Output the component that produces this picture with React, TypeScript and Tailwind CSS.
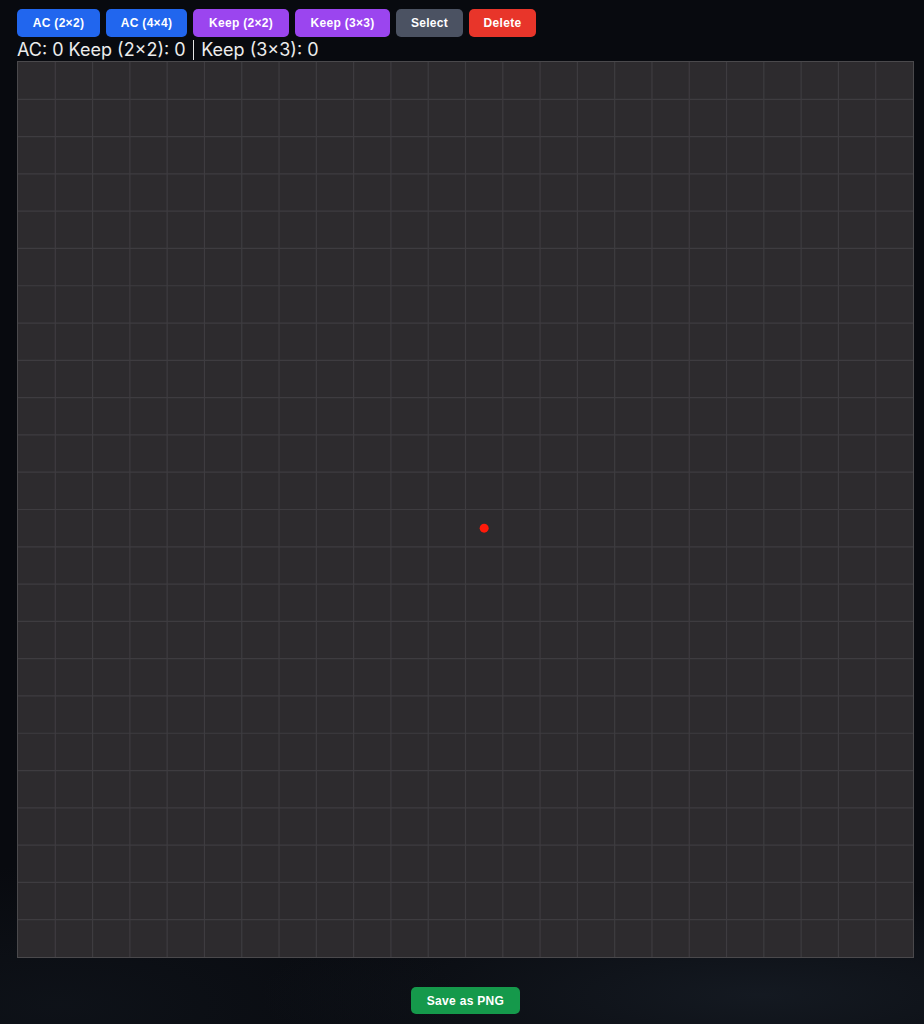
import React from "react";

const CELLS = 24;
const SIZE = 895;

function Grid() {
  const step = SIZE / CELLS;
  const lines: React.ReactElement[] = [];
  for (let i = 1; i < CELLS; i++) {
    const p = i * step;
    lines.push(<line key={`v${i}`} x1={p} y1={0} x2={p} y2={SIZE} stroke="#3e3c40" strokeWidth={1.2} />);
    lines.push(<line key={`h${i}`} x1={0} y1={p} x2={SIZE} y2={p} stroke="#3e3c40" strokeWidth={1.2} />);
  }
  return (
    <svg width={SIZE} height={SIZE} viewBox={`0 0 ${SIZE} ${SIZE}`} className="block">
      <rect x={0} y={0} width={SIZE} height={SIZE} fill="#2d2b2e" />
      {lines}
      <circle cx={12 * step + step / 2} cy={12 * step + step / 2} r={4.5} fill="#ff1a0a" />
    </svg>
  );
}

export default function App() {
  const btn =
    "h-7 px-3.5 rounded-[5px] text-white text-[12px] font-bold tracking-wide leading-none flex items-center justify-center";
  return (
    <div
      className="min-h-[1024px] w-full text-white"
      style={{
        fontFamily: "'Liberation Sans', Arial, sans-serif",
        background:
          "radial-gradient(ellipse 500px 110px at 760px 995px, rgba(38,48,60,0.4), transparent), radial-gradient(ellipse 400px 140px at 60px 1005px, rgba(28,36,46,0.3), transparent), #080a0f",
      }}
    >
      <div className="pl-[17px] pt-[9px] flex flex-col items-start w-[914px]">
        <div className="flex gap-[6px]">
          <button className={`${btn} bg-[#2166ee] w-[83px]`}>AC (2×2)</button>
          <button className={`${btn} bg-[#2166ee] w-[81px]`}>AC (4×4)</button>
          <button className={`${btn} bg-[#9b45ef] w-[96px]`}>Keep (2×2)</button>
          <button className={`${btn} bg-[#9b45ef] w-[95px]`}>Keep (3×3)</button>
          <button className={`${btn} bg-[#4b5262] w-[67px]`}>Select</button>
          <button className={`${btn} bg-[#e8352a] w-[67px]`}>Delete</button>
        </div>
        <div
          className="h-[24px] pt-[2px] flex items-center text-[18px] leading-none text-[#ececec]"
          style={{ fontFamily: "Inter, 'Noto Sans', sans-serif" }}
        >
          <span>AC: 0 Keep (2×2): 0</span>
          <span className="inline-block w-[1.5px] h-[20px] bg-[#e5e5e5] mx-[7px]" />
          <span>Keep (3×3): 0</span>
        </div>
        <div className="border border-[#4a494c]">
          <Grid />
        </div>
        <div className="w-[897px] flex justify-center mt-[29px]">
          <button className="h-[27px] w-[109px] rounded-[5px] bg-[#15994b] text-white text-[12px] font-bold tracking-wide flex items-center justify-center">
            Save as PNG
          </button>
        </div>
      </div>
    </div>
  );
}
